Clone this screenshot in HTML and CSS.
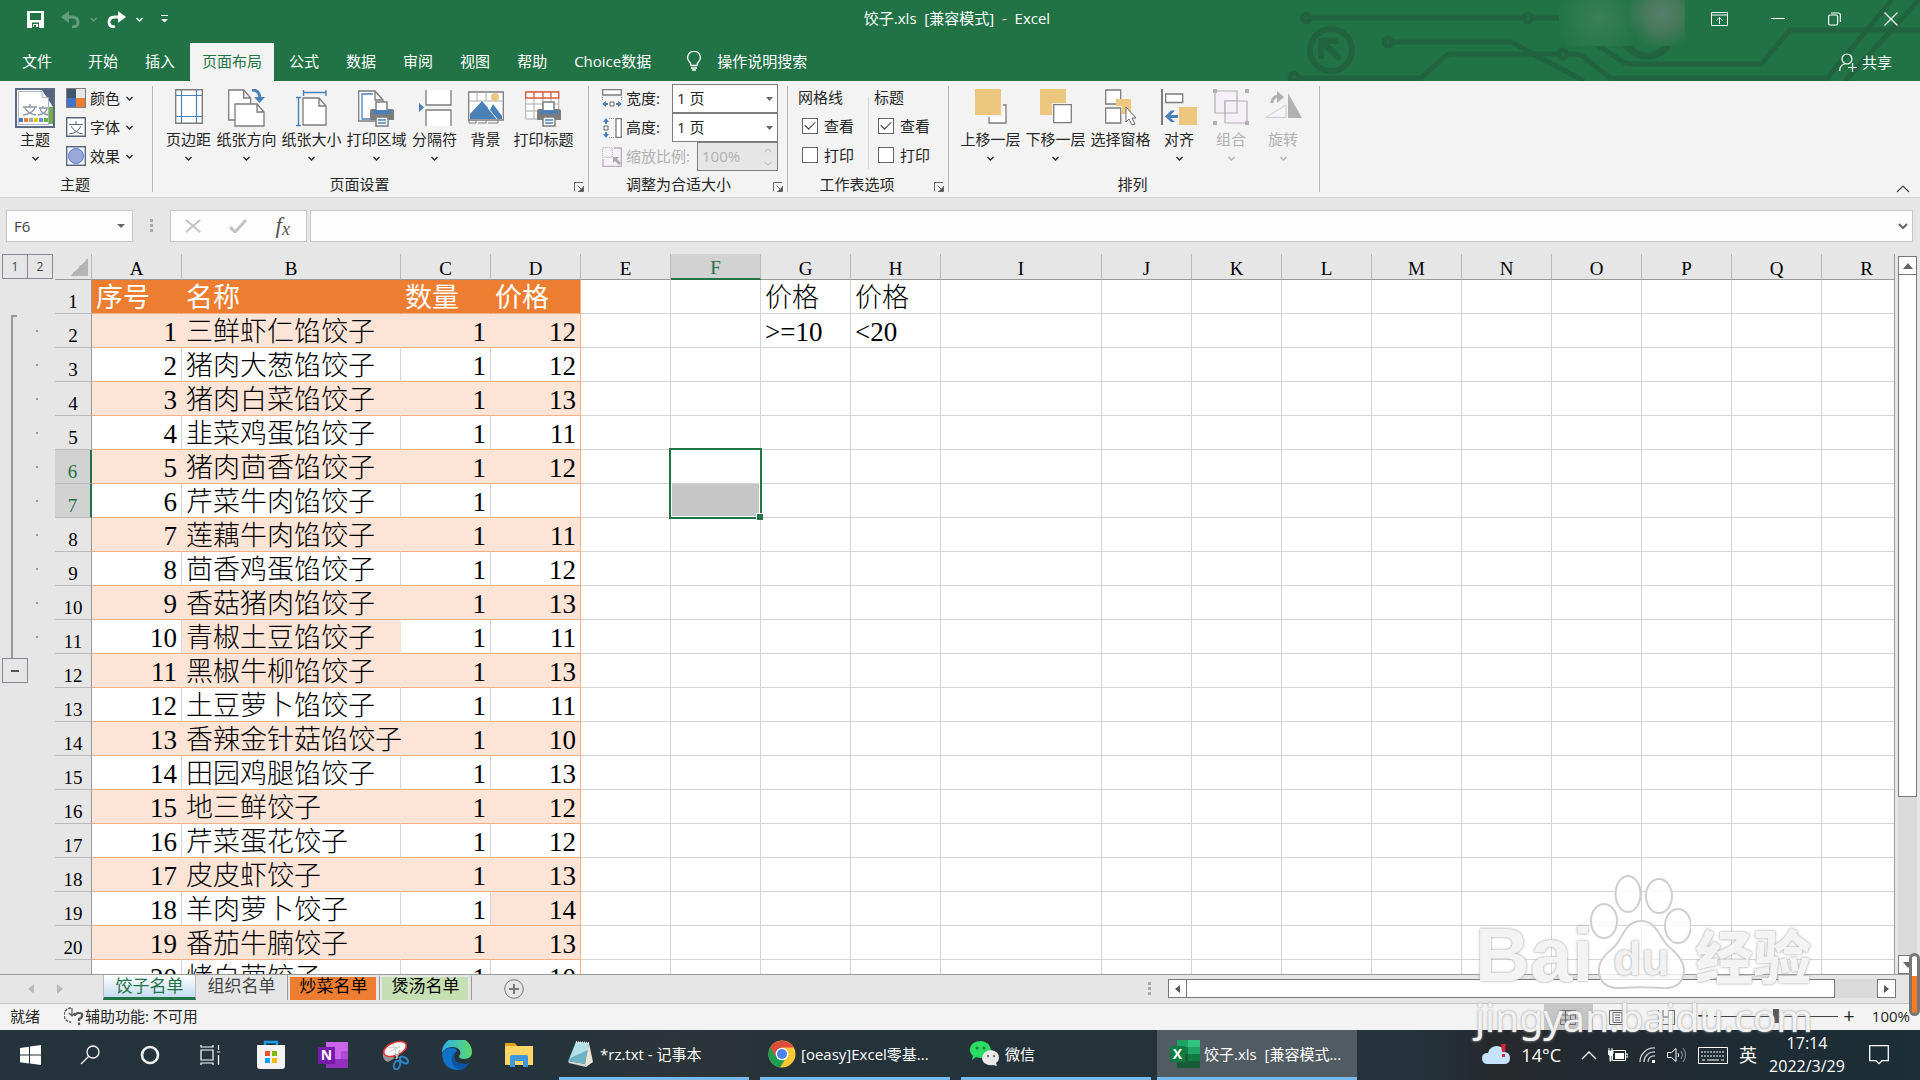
FILE: index.html
```html
<!DOCTYPE html>
<html lang="zh-CN">
<head>
<meta charset="utf-8">
<title>饺子.xls [兼容模式] - Excel</title>
<link rel="stylesheet" href="styles.css">
</head>
<body>
<svg class="defs" aria-hidden="true">
  <symbol id="chev" viewBox="0 0 7 5"><path d="M.5 1 3.5 4 6.5 1" fill="none" stroke="currentColor" stroke-width="1.3"/></symbol>
  <symbol id="launch" viewBox="0 0 10 10"><path d="M.5 9V.5H9M3.500 3.500 8 8M9.500 4V9.500H4" fill="none" stroke="#666"/><path d="M9 5v4H5z" fill="#555"/></symbol>
  <symbol id="printer" viewBox="0 0 26 26"><path d="M7 1h11v9H7z" fill="#fff" stroke="#7c7c7c" stroke-width="1.500"/><path d="M1 10q0-2 2-2h4v4h12V8h4q2 0 2 2v9H1z" fill="#7c7c7c"/><path d="M4 9h18v4H4z" fill="#4a80b8"/><path d="M7 16h12v9H7z" fill="#fff" stroke="#7c7c7c" stroke-width="1.500"/><path d="M9 19h8M9 22h8" stroke="#4a80b8" stroke-width="1.500"/></symbol>
</svg>

<header class="top">
  <svg class="circuit" viewBox="1280 0 640 81" aria-hidden="true">
    <g fill="none" stroke="#22633f" stroke-width="5">
      <circle cx="1306" cy="18" r="4"/><path d="M1310 18H1524M1532 18h27"/><circle cx="1528" cy="18" r="4"/>
      <circle cx="1331" cy="50" r="21" stroke-width="6"/><path d="M1321 59V41h18M1322 42l18 17" stroke-width="6"/>
      <circle cx="1388" cy="42" r="4"/><path d="M1392 42h116q6 0 12 5l64 34"/>
      <circle cx="1294" cy="77" r="4"/><path d="M1298 78h123l22-20q4-4 10-4h106"/><circle cx="1563" cy="54" r="4"/>
      <path d="M1567 54h8q6 0 10 4l25 20h217L1892 0M1845 81 1919 0M1596 44l24 16q5 4 12 4h129l29-34h130"/>
      <circle cx="1647" cy="31" r="25" stroke-width="7"/>
    </g>
  </svg>
  <div class="account"></div>
  <div class="titlebar">
    <div class="quick">
      <button aria-label="保存"><svg width="17" height="17" viewBox="0 0 17 17"><path fill-rule="evenodd" d="M0 0h17v17H0zM3 2v7h11V2zM5 11.500V17h7v-5.500z" fill="#fff"/><path d="M6 13h5v3H9v-2H7v2H6z" fill="#fff"/></svg></button>
      <button class="dim" aria-label="撤消"><svg width="19" height="17" viewBox="0 0 19 17"><path d="M2 6h9q6 0 6 5t-6 5" fill="none" stroke="#fff" stroke-width="2.800"/><path d="M8 0v12L0 6z" fill="#fff"/></svg></button>
      <svg class="dim" width="7" height="5"><use href="#chev"/></svg>
      <button class="redo" aria-label="恢复"><svg width="19" height="17" viewBox="0 0 19 17"><path d="M16 6H8q-6 0-6 5t6 5" fill="none" stroke="#fff" stroke-width="2.800"/><path d="M11 0v12l8-6z" fill="#fff"/></svg></button>
      <svg width="7" height="5"><use href="#chev"/></svg>
      <button class="custom" aria-label="自定义"><svg width="7" height="8" viewBox="0 0 7 8"><path d="M0 .5h7" stroke="#fff"/><path d="M0 4h7L3.500 7.500z" fill="#fff"/></svg></button>
    </div>
    <div class="title">饺子.xls&nbsp; [兼容模式]&nbsp; -&nbsp; Excel</div>
    <div class="window">
      <button aria-label="功能区显示选项"><svg width="17" height="14" viewBox="0 0 17 14" fill="none" stroke="#fff"><path d="M.5.5h16v13H.5zM0 3h17M8.500 12V5.500M5.500 8.500l3-3 3 3"/></svg></button>
      <button aria-label="最小化"><svg width="14" height="14"><path d="M0 6.500h14" stroke="#fff"/></svg></button>
      <button aria-label="还原"><svg width="13" height="14" viewBox="0 0 13 14" fill="none" stroke="#fff" stroke-width="1.200"><rect x=".6" y="3" width="9" height="10" rx="1.500"/><path d="M3 1h7q2.400 0 2.400 2v7"/></svg></button>
      <button aria-label="关闭"><svg width="14" height="14"><path d="M.5.5l13 13M13.500.5l-13 13" stroke="#fff" stroke-width="1.200"/></svg></button>
    </div>
  </div>
  <nav class="tabs">
    <button class="file">文件</button><button>开始</button><button>插入</button><button class="on">页面布局</button><button>公式</button><button>数据</button><button>审阅</button><button>视图</button><button>帮助</button><button>Choice数据</button>
    <button class="tell"><svg width="16" height="20" viewBox="0 0 16 20" fill="none" stroke="#fff" stroke-width="1.300"><path d="M5 14.500Q5 12 2.500 9.500A6.300 6.300 0 1 1 13.500 9.500Q11 12 11 14.500zM5 17h6M6 19h4"/></svg>操作说明搜索</button>
    <button class="share"><svg width="18" height="19" viewBox="0 0 18 19" fill="none" stroke="#fff" stroke-width="1.200"><circle cx="8" cy="6" r="5"/><path d="M.7 18q0-6 5-7M9 14.500h9M13.500 10v9"/></svg>共享</button>
  </nav>
</header>

<section class="ribbon">
  <div class="group themes">
    <div class="body">
      <button class="big"><svg width="40" height="40" viewBox="0 0 40 40"><path d="M1 1h38v38H1z" fill="#fff" stroke="#5c6b84" stroke-width="2"/><path d="M27 2h11v17z" fill="#56657d"/><path d="M34 19h4v17h-4z" fill="#70ad47"/><path d="M3.500 3.500H27v6h6.500v27h-30z" fill="#fff" stroke="#a9b4c6"/><path d="M8 19h14M15 16v3M10 20q3 6 11 7M20 20q-3 6-12 7M24 20h9M28 18v2M25 21q2 5 8 6M32 21q-2 5-9 6" fill="none" stroke="#8b95a6" stroke-width="1.400"/><path d="M4 30h4v4H4z" fill="#4472c4"/><path d="M9 30h4v4H9z" fill="#ed7d31"/><path d="M14 30h4v4h-4z" fill="#a5a5a5"/><path d="M19 30h4v4h-4z" fill="#ffc000"/><path d="M24 30h4v4h-4z" fill="#5b9bd5"/><path d="M29 30h4v4h-4z" fill="#70ad47"/></svg><span>主题</span><svg width="7" height="5"><use href="#chev"/></svg></button>
      <div class="stack">
        <button><svg width="20" height="20" viewBox="0 0 20 20"><path d="M0 0h20v20H0z" fill="#7c7c7c"/><path d="M1 1h9v9H1z" fill="#44546a"/><path d="M10 1h9v9h-9z" fill="#e7e6e6"/><path d="M1 10h9v9H1z" fill="#4472c4"/><path d="M10 10h9v9h-9z" fill="#ed7d31"/></svg>颜色<svg width="7" height="5"><use href="#chev"/></svg></button>
        <button><svg width="20" height="20" viewBox="0 0 20 20" fill="none" stroke="#56657d"><path d="M.7.7h18.600v18.600H.7z" fill="#fff" stroke-width="1.400"/><path d="M3 7.500h14M10 4v3M5 9q4 7 12 8M15 9q-3 7-12 8"/></svg>字体<svg width="7" height="5"><use href="#chev"/></svg></button>
        <button><svg width="20" height="20" viewBox="0 0 20 20"><path d="M.7.7h18.600v18.600H.7z" fill="#fff" stroke="#56657d" stroke-width="1.400"/><circle cx="10" cy="10" r="7.500" fill="#9aa8dc" stroke="#4f7bc6"/></svg>效果<svg width="7" height="5"><use href="#chev"/></svg></button>
      </div>
    </div>
    <h2>主题</h2>
  </div>

  <div class="group setup">
    <div class="body">
      <button class="big"><svg width="28" height="36" viewBox="0 0 28 36"><path d="M.7.700h26.600v33.600H.7z" fill="#fff" stroke="#7c7c7c" stroke-width="1.400"/><path d="M6.500 1v33M21.500 1v33M1 6.500h26M1 27.500h26" stroke="#4a80b8" stroke-width="1.200"/></svg><span>页边距</span><svg width="7" height="5"><use href="#chev"/></svg></button>
      <button class="big"><svg width="37" height="38" viewBox="0 0 37 38"><g fill="#fff" stroke="#7c7c7c" stroke-width="1.300"><path d="M.7 1h15l7 8v22H.7zM15.700 1v8h7"/><path d="M7 15h22l7 8v14H7zM29 15v8h7"/></g><path d="M24 1q8 0 8 9" fill="none" stroke="#4a80b8" stroke-width="3"/><path d="M26 8h11l-5.500 6z" fill="#4a80b8"/></svg><span>纸张方向</span><svg width="7" height="5"><use href="#chev"/></svg></button>
      <button class="big"><svg width="31" height="38" viewBox="0 0 31 38"><path d="M7 9h16l7 8v19H7zM23 9v8h7" fill="#fff" stroke="#7c7c7c" stroke-width="1.300"/><path d="M7 3.500h23M7.500 1v6M30 1v6M2.500 9v27M0 8.500h5M0 36.500h5" stroke="#4a80b8" stroke-width="1.400"/></svg><span>纸张大小</span><svg width="7" height="5"><use href="#chev"/></svg></button>
      <button class="big"><svg width="38" height="38" viewBox="0 0 38 38"><path d="M.7 2H17l8 9v21H.7zM17 2v9h8" fill="#fff" stroke="#7c7c7c" stroke-width="1.300"/><path d="M15 5H4v25h8" fill="none" stroke="#4a80b8" stroke-width="1.300"/><use href="#printer" x="11" y="12" width="26" height="26"/></svg><span>打印区域</span><svg width="7" height="5"><use href="#chev"/></svg></button>
      <button class="big"><svg width="34" height="38" viewBox="0 0 34 38"><path d="M8 1v15h25V1M8 37V21h25v16" fill="#fff" stroke="#7c7c7c" stroke-width="1.300"/><path d="M1 14l5 4.500L1 23z" fill="#4a80b8"/></svg><span>分隔符</span><svg width="7" height="5"><use href="#chev"/></svg></button>
      <button class="big wide"><svg width="36" height="36" viewBox="0 0 36 36"><path d="M.7 3h34.600v28H.7z" fill="#fff" stroke="#7c7c7c" stroke-width="1.300"/><path d="M9 3v9M18 3v9M1 12h34M27 3v9" stroke="#aaa"/><path d="M2 30v-5l12-13 8 9 3-6 9 12v3z" fill="#4a80b8"/><path d="M20 19l9 11" stroke="#fff"/><circle cx="27" cy="8" r="4" fill="#eec77f"/><path d="M1 31v3h7v-3M10 34h8v-3M20 34h10v-3" fill="none" stroke="#7c7c7c"/></svg><span>背景</span></button>
      <button class="big"><svg width="38" height="38" viewBox="0 0 38 38"><path d="M.7 3h33v27H.7z" fill="#fff" stroke="#aaa"/><path d="M1 15h32M1 22h32M9 8v22M18 8v22M26 8v22" stroke="#aaa"/><path d="M.7 3h33v6H.7zM9 3v6M18 3v6M26 3v6" fill="#fff" stroke="#d9593f" stroke-width="1.300"/><use href="#printer" x="11" y="12" width="26" height="26"/></svg><span>打印标题</span></button>
    </div>
    <h2>页面设置</h2>
    <button class="launcher" aria-label="页面设置选项"><svg width="10" height="10"><use href="#launch"/></svg></button>
  </div>

  <div class="group fit">
    <div class="rows">
      <div class="field"><svg width="20" height="20" viewBox="0 0 20 20"><path d="M.7.700h18.600V6H.7z" fill="#fff" stroke="#7c7c7c" stroke-width="1.300"/><path d="M.5 8v4M19.500 8v4" stroke="#7c7c7c" stroke-dasharray="1 1"/><path d="M8 13h4v4H8z" fill="#fff" stroke="#666"/><path d="M0 15l4-3v2h2v2H4v2zM20 15l-4-3v2h-2v2h2v2z" fill="#4a80b8"/></svg><label for="w">宽度:</label><div class="combo"><select id="w"><option>1 页</option></select><svg width="7" height="4"><path d="M0 0h7L3.500 4z" fill="#666"/></svg></div></div>
      <div class="field"><svg width="20" height="20" viewBox="0 0 20 20"><path d="M14 .7h5.300v18.600H14z" fill="#fff" stroke="#7c7c7c" stroke-width="1.300"/><path d="M7 .5h5M7 19.500h5" stroke="#7c7c7c" stroke-dasharray="1 1"/><path d="M2 8h4v4H2z" fill="#fff" stroke="#666"/><path d="M4 0l3 4H5v2H3V4H1zM4 20l3-4H5v-2H3v2H1z" fill="#4a80b8"/></svg><label for="h">高度:</label><div class="combo"><select id="h"><option>1 页</option></select><svg width="7" height="4"><path d="M0 0h7L3.500 4z" fill="#666"/></svg></div></div>
      <div class="field off"><svg width="20" height="20" viewBox="0 0 20 20"><path d="M1 12v7.300h18.300V1H12" fill="#f6f0f8" stroke="#b9aebb" stroke-width="1.300"/><path d="M.7.700h9.600v9.600H.7z" fill="none" stroke="#aaa" stroke-dasharray="1 1"/><path d="M11 10h6l-2 2 4 4-2 2-4-4-2 2z" fill="#aaa"/></svg><label for="z">缩放比例:</label><div class="combo"><input id="z" value="100%" disabled><svg width="8" height="18" fill="none" stroke="#aaa"><path d="M.5 4 4 .7 7.500 4M.5 14 4 17.300 7.500 14"/></svg></div></div>
    </div>
    <h2>调整为合适大小</h2>
    <button class="launcher" aria-label="调整选项"><svg width="10" height="10"><use href="#launch"/></svg></button>
  </div>

  <div class="group options">
    <div class="pair">
      <fieldset><legend>网格线</legend><label><input type="checkbox" checked>查看</label><label><input type="checkbox">打印</label></fieldset>
      <fieldset><legend>标题</legend><label><input type="checkbox" checked>查看</label><label><input type="checkbox">打印</label></fieldset>
    </div>
    <h2>工作表选项</h2>
    <button class="launcher" aria-label="工作表选项"><svg width="10" height="10"><use href="#launch"/></svg></button>
  </div>

  <div class="group arrange">
    <div class="body">
      <button class="big"><svg width="32" height="36" viewBox="0 0 32 36"><path d="M14 16h17v18H14z" fill="#fff" stroke="#7c7c7c" stroke-width="1.300"/><path d="M0 0h28v28H0z" fill="#f3f3f3"/><path d="M0 0h26v26H0z" fill="#eec77f"/></svg><span>上移一层</span><svg width="7" height="5"><use href="#chev"/></svg></button>
      <button class="big"><svg width="32" height="36" viewBox="0 0 32 36"><path d="M0 0h26v26H0z" fill="#eec77f"/><path d="M12 14h20v22H12z" fill="#f3f3f3"/><path d="M13.700 15.700h17.600v18H13.700z" fill="#fff" stroke="#7c7c7c" stroke-width="1.300"/></svg><span>下移一层</span><svg width="7" height="5"><use href="#chev"/></svg></button>
      <button class="big"><svg width="32" height="37" viewBox="0 0 32 37"><path d="M.7 1h15v14H.7z" fill="#fff" stroke="#7c7c7c" stroke-width="1.300"/><path d="M11 10h15v15H11z" fill="#eec77f"/><path d="M0 17h17v18H0z" fill="#f3f3f3"/><path d="M.7 19h15v15H.7z" fill="#fff" stroke="#7c7c7c" stroke-width="1.300"/><path d="M21 18v15l3-3 3 6 3-1-3-6h4z" fill="#fff" stroke="#666"/></svg><span>选择窗格</span></button>
      <button class="big narrow"><svg width="36" height="37" viewBox="0 0 36 37"><path d="M1 0v36" stroke="#7c7c7c" stroke-width="2"/><path d="M4.700 5h17v8.500h-17z" fill="#fff" stroke="#7c7c7c" stroke-width="1.300"/><path d="M18 18h18v18H18z" fill="#eec77f"/><path d="M4 27.500l6-6h4l-4.500 4.500H17v3H9.500L14 33h-4z" fill="#4a80b8"/></svg><span>对齐</span><svg width="7" height="5"><use href="#chev"/></svg></button>
      <button class="big narrow off"><svg width="36" height="37" viewBox="0 0 36 37"><g stroke="#b1b1b1" stroke-width="1.200" fill="#f5f0f7"><path d="M2 2h22v22H2z"/><path d="M12 12h22v22H12z"/><path d="M12 12h12v12H12z"/></g><path d="M0 0h4v4H0zM32 0h4v4h-4zM0 32h4v4H0zM32 32h4v4h-4z" fill="#b1b1b1"/></svg><span>组合</span><svg width="7" height="5"><use href="#chev"/></svg></button>
      <button class="big narrow off"><svg width="37" height="34" viewBox="0 0 37 34"><path d="M1 28.500 21 16v12.500z" fill="#f8f2fa" stroke="#ccc"/><path d="M23 4v25h14z" fill="#b1b1b1"/><path d="M7 14q0-7 8-7" fill="none" stroke="#b1b1b1" stroke-width="3"/><path d="M12 2l7 6-7 6z" fill="#b1b1b1"/></svg><span>旋转</span><svg width="7" height="5"><use href="#chev"/></svg></button>
    </div>
    <h2>排列</h2>
  </div>
  <button class="collapse" aria-label="折叠功能区"><svg width="14" height="8"><path d="M1 7l6-6 6 6" fill="none" stroke="#444" stroke-width="1.200"/></svg></button>
</section>

<section class="formula">
  <div class="namebox"><input aria-label="名称框" value="F6"><svg width="8" height="4"><path d="M0 0h8L4 4z" fill="#666"/></svg></div>
  <svg class="grip" width="3" height="14" fill="#a9a9a9"><path d="M0 0h3v3H0zM0 5h3v3H0zM0 10h3v3H0z"/></svg>
  <div class="fx">
    <button aria-label="取消"><svg width="16" height="14"><path d="M1 1l14 12M15 1 1 13" stroke="#c3c3c3" stroke-width="2"/></svg></button>
    <button aria-label="输入"><svg width="18" height="14"><path d="M1 8l5 5L17 1" fill="none" stroke="#c3c3c3" stroke-width="3"/></svg></button>
    <button class="fn" aria-label="插入函数"><i>f</i><i class="x">x</i></button>
  </div>
  <div class="entry"><input aria-label="编辑栏"><svg width="10" height="7"><path d="M1 1l4 4 4-4" fill="none" stroke="#666" stroke-width="2"/></svg></div>
</section>

<main class="work">
  <aside class="outline">
    <div class="levels"><button>1</button><button>2</button></div>
    <div class="bracket"></div>
    <div class="dots"><i></i><i></i><i></i><i></i><i></i><i></i><i></i><i></i><i></i><i></i></div>
    <button class="minus" aria-label="折叠"></button>
  </aside>
  <div class="view"><table class="sheet" id="sheet"></table></div>
  <div class="vbar">
    <button aria-label="向上"><svg width="10" height="6"><path d="M0 6h10L5 0z" fill="#666"/></svg></button>
    <div class="thumb"></div><div class="track"></div>
    <button aria-label="向下"><svg width="10" height="6"><path d="M0 0h10L5 6z" fill="#666"/></svg></button>
  </div>
</main>

<section class="bottom">
  <div class="nav"><svg width="6" height="10"><path d="M6 0v10L0 5z" fill="#bbb"/></svg><svg width="6" height="10"><path d="M0 0v10l6-5z" fill="#bbb"/></svg></div>
  <div class="sheets"><button class="active">饺子名单</button><button>组织名单</button><button class="orange">炒菜名单</button><button class="green">煲汤名单</button></div>
  <button class="add" aria-label="新工作表"><svg width="20" height="20" fill="none" stroke="#777"><circle cx="10" cy="10" r="9.300"/><path d="M5 10h10M10 5v10" stroke-width="2"/></svg></button>
  <svg class="grip" width="3" height="14" fill="#a9a9a9"><path d="M0 0h3v3H0zM0 5h3v3H0zM0 10h3v3H0z"/></svg>
  <div class="hbar">
    <button aria-label="向左"><svg width="5" height="8"><path d="M5 0v8L0 4z" fill="#555"/></svg></button>
    <div class="thumb"></div><div class="track"></div>
    <button aria-label="向右"><svg width="5" height="8"><path d="M0 0v8l5-4z" fill="#555"/></svg></button>
  </div>
</section>

<footer class="status">
  <span>就绪</span>
  <span class="access"><svg width="20" height="18" viewBox="0 0 20 18" fill="none" stroke="#555"><path d="M7 1A7 7 0 0 0 7 15" stroke-dasharray="3 1" stroke-width="1.500"/><path d="M8 1v7M5 6l3 3 3-3" stroke-width="1.200"/><path d="M11 9q0-3 4-3t3 3q0 2-3 3v2M15 15.500V18" stroke-width="2.200"/></svg>辅助功能: 不可用</span>
  <div class="views">
    <button class="on" aria-label="普通"><svg width="16" height="15" fill="none" stroke="#666"><path d="M.5.5h15v14H.5zM0 5h16M0 10h16M5.500 0v15M10.500 0v15"/></svg></button>
    <button aria-label="页面布局"><svg width="17" height="15" fill="none" stroke="#666"><path d="M.5.5h16v14H.5zM4 2.500h9v10H4zM6 5h5M6 7.500h5M6 10h5"/></svg></button>
    <button aria-label="分页预览"><svg width="17" height="15" fill="none" stroke="#666"><path d="M.5 0v14.500h16V.5H11M5 0v7h6V0M1 10h5"/></svg></button>
  </div>
  <div class="zoomer"><button aria-label="缩小">−</button><input type="range" aria-label="缩放"><button aria-label="放大">+</button></div>
  <span class="pct">100%</span>
</footer>

<footer class="taskbar">
  <button class="ic" aria-label="开始菜单"><svg width="21" height="20" fill="#fff"><path d="M0 3l9-1.300V9.500H0zM10 1.500 21 0v9.500H10zM0 10.500h9v8L0 17.200zM10 10.500h11V20l-11-1.500z"/></svg></button>
  <button class="ic" aria-label="搜索"><svg width="20" height="20" fill="none" stroke="#fff" stroke-width="1.300"><circle cx="13" cy="7" r="6"/><path d="M8.500 11.500 1 19"/></svg></button>
  <button class="ic" aria-label="Cortana"><svg width="20" height="20"><circle cx="10" cy="10" r="8" fill="none" stroke="#eee" stroke-width="2.600"/></svg></button>
  <button class="ic" aria-label="任务视图"><svg width="21" height="20" fill="none" stroke="#fff" stroke-width="1.200"><path d="M1 5h12v10H1zM1 0v2h12V0M1 20v-2h12v2M18.500 0v5M18.500 10v10M17 7h3"/></svg></button>
  <button class="ic" aria-label="Microsoft Store"><svg width="30" height="30"><path d="M9 7V2h12v5" fill="none" stroke="#18a0e8" stroke-width="2.400"/><path d="M1 5h28v21q0 3-3 3H4q-3 0-3-3z" fill="#f3f3f3"/><path d="M9 11h5v5H9z" fill="#f25022"/><path d="M16 11h5v5h-5z" fill="#7fba00"/><path d="M9 18h5v5H9z" fill="#00a4ef"/><path d="M16 18h5v5h-5z" fill="#ffb900"/></svg></button>
  <button class="ic" aria-label="OneNote"><svg width="30" height="30"><path d="M8 2h22v26H8z" fill="#ca64ea"/><path d="M23 11h7v8h-7z" fill="#ae4bd5"/><path d="M8 19h22v9H8z" fill="#9332bf"/><path d="M0 7h17v17H0z" fill="#7719aa"/><text x="8.500" y="20" text-anchor="middle" class="glyph">N</text></svg></button>
  <button class="ic" aria-label="截图工具"><svg width="30" height="30"><path d="M3 13Q2 20 8 22l7-4z" fill="#999"/><ellipse cx="15" cy="9" rx="12" ry="6.500" transform="rotate(-22 15 9)" fill="#fff" stroke="#d33" stroke-width="1.600"/><path d="M9 12 20 7M7 8l13-1M13 4l3 8" stroke="#ccc"/><path d="M15 13l3 5M20 10l-4 9" stroke="#bbb" stroke-width="1.500"/><g fill="none" stroke="#2f86c6" stroke-width="2"><ellipse cx="17" cy="25" rx="3" ry="4.500" transform="rotate(20 17 25)"/><ellipse cx="24" cy="20" rx="4.500" ry="2.600" transform="rotate(35 24 20)"/></g></svg></button>
  <button class="ic" aria-label="Edge"><svg width="30" height="30" viewBox="0 0 30 30"><defs><linearGradient id="eg" x1="0" x2="1"><stop offset="0" stop-color="#2cb1e8"/><stop offset="1" stop-color="#5ed86c"/></linearGradient></defs><path d="M0 13A15 15 0 0 1 30 12q0 7-8 7-5 0-5-3 2-2 1-5-2-4-8-4-7 0-10 6z" fill="url(#eg)"/><path d="M0 14Q3 7 10 8q4 0 5 3-3 2-3 6 0 7 10 7 3 0 5-1-5 7-12 7Q1 29 0 14z" fill="#1071c8"/><path d="M15 11q-7 3-5 11 2 6 8 8 6-1 9-7-2 1-5 1-10 0-10-7 0-4 3-6z" fill="#0d55a4"/></svg></button>
  <button class="ic" aria-label="文件资源管理器"><svg width="30" height="28"><path d="M1 2h10l3 4H1z" fill="#e0a018"/><path d="M1 5h28v19H1z" fill="#ffd565"/><path d="M6 26V16q0-2 2-2h14q2 0 2 2v10h-5v-6h-8v6z" fill="#3f97dc"/></svg></button>
  <div class="apps">
    <button class="app"><svg width="28" height="28"><path d="M9 2l13 1-4 21-17-3z" fill="#6fb4c6"/><path d="M9 2l13 1-1 7L3 18z" fill="#b4e0ea"/><path d="M22 3l4 19-7 5-1-3z" fill="#e8e4d6"/><path d="M1 21l17 3 1 3-17-4z" fill="#d4dadb"/><path d="M9 2l13 1" stroke="#eee" stroke-width="2" stroke-dasharray="1 1"/></svg>*rz.txt - 记事本</button>
    <button class="app"><svg width="28" height="28" viewBox="0 0 28 28"><circle cx="14" cy="14" r="13.500" fill="#fcc934"/><path d="M14 14 2.300 7.300A13.500 13.500 0 0 0 12 27.400l7-11z" fill="#1e9e53"/><path d="M2.300 7.300A13.500 13.500 0 0 1 25.700 7.500H14L8 17z" fill="#de4d3b"/><circle cx="14" cy="14" r="6.300" fill="#fff"/><circle cx="14" cy="14" r="5" fill="#4a84ea"/></svg>[oeasy]Excel零基...</button>
    <button class="app"><svg width="31" height="28"><path d="M3 20l1-4Q0 12 1 8q2-7 11-7 9 1 10 9 0 8-10 8-3 0-5-1z" fill="#2bdc62"/><circle cx="8" cy="8" r="1.500" fill="#15803d"/><circle cx="15" cy="8" r="1.500" fill="#15803d"/><path d="M28 26l-4-1q-9 1-11-6 0-8 9-9 8 1 8 8 0 3-3 5z" fill="#e9e9e9"/><circle cx="19" cy="16" r="1.200" fill="#777"/><circle cx="25" cy="16" r="1.200" fill="#777"/></svg>微信</button>
    <button class="app cur"><svg width="30" height="28"><path d="M7 0h23v28H7z" fill="#21a366"/><path d="M18 0h12v7H18z" fill="#33c481"/><path d="M7 7h11v7H7z" fill="#107c41"/><path d="M18 14h12v7H18z" fill="#107c41"/><path d="M7 14h11v14H7zM18 21h12v7H18z" fill="#185c37"/><path d="M0 6h15v16H0z" fill="#107c41"/><text x="7.500" y="19" text-anchor="middle" class="glyph">X</text></svg>饺子.xls&nbsp; [兼容模式...</button>
  </div>
  <div class="tray">
    <svg width="28" height="22"><path d="M6 20q-6 0-6-6 0-5 6-5 2-7 9-7 6 0 8 6 5 1 5 6 0 6-6 6z" fill="#c5e4fb"/><path d="M19 0h5l-1 8h-3zM20 10h3v3h-3z" fill="#d8203a"/></svg>
    <span class="temp">14°C</span>
    <svg width="16" height="10"><path d="M1 9l7-7 7 7" fill="none" stroke="#fff" stroke-width="1.400"/></svg>
    <svg class="bat" width="20" height="14"><path d="M4.500 2.500h13v10h-13zM18 6h2v3h-2" fill="none" stroke="#fff"/><path d="M7 5h9v6H7z" fill="#fff"/><path d="M0 3h5v3l-2 2v5H2V8L0 6zM1 0v3M4 0v3" fill="#fff" stroke="#fff"/></svg>
    <svg class="wifi" width="17" height="16" fill="none" stroke="#ccc" stroke-width="1.300"><path d="M1 15A14 14 0 0 1 16 1M5 15A10 10 0 0 1 16 5M9 15a6 6 0 0 1 7-6"/><path d="M13 13h3v3h-3z" fill="#fff" stroke="none"/></svg>
    <svg width="20" height="16" fill="none" stroke="#fff"><path d="M.5 5.500h4L9 1.500v13L4.500 10.500h-4z"/><path d="M11 6q1.500 2 0 4"/><path d="M14 4q3 4 0 8M16 1q5 7 0 14" stroke="#99a"/></svg>
    <svg width="30" height="17" fill="none" stroke="#fff"><path d="M.5.5h29v16H.5z"/><path d="M3 5h24M3 9h24" stroke-dasharray="2 1"/><path d="M4 13h3M9 13h12M23 13h3"/></svg>
    <span class="ime">英</span>
    <div class="clock"><span>17:14</span><span>2022/3/29</span></div>
    <svg class="note" width="20" height="20" fill="none" stroke="#fff" stroke-width="1.300"><path d="M.7.700h18.600v15H13l-3 3-3-3H.7z"/></svg>
  </div>
</footer>

<div class="pill"></div>
<div class="mark" aria-hidden="true">
  <div class="brand"><b>Bai</b><span class="paw"><svg width="102" height="116" viewBox="0 0 102 116"><g fill="rgba(255,255,255,.78)" stroke="#cfcfcf" stroke-width="2"><ellipse cx="15" cy="46" rx="13" ry="17"/><ellipse cx="39" cy="19" rx="12.500" ry="18"/><ellipse cx="70" cy="21" rx="13" ry="17"/><ellipse cx="89" cy="51" rx="13" ry="17"/><path d="M52 46c16 0 18 17 28 26 10 8 15 15 15 23 0 14-10 19-22 18-13-1-29-1-41 0C18 114 10 107 10 95c0-10 7-16 15-23 9-9 11-26 27-26z"/></g></svg><b>du</b></span><b class="han">经验</b></div>
  <div class="url">jingyan.baidu.com</div>
</div>
<script src="sheet.js"></script>
</body>
</html>
```
FILE: sheet.js
```js
const columns = 'ABCDEFGHIJKLMNOPQR'.split('');
const widths = { B: 219, I: 161 };
const names = ['三鲜虾仁馅饺子', '猪肉大葱馅饺子', '猪肉白菜馅饺子', '韭菜鸡蛋馅饺子', '猪肉茴香馅饺子', '芹菜牛肉馅饺子', '莲藕牛肉馅饺子', '茴香鸡蛋馅饺子', '香菇猪肉馅饺子', '青椒土豆馅饺子', '黑椒牛柳馅饺子', '土豆萝卜馅饺子', '香辣金针菇馅饺子', '田园鸡腿馅饺子', '地三鲜饺子', '芹菜蛋花饺子', '皮皮虾饺子', '羊肉萝卜饺子', '番茄牛腩饺子', '烤白萝饺子'];
const prices = [12, 12, 13, 11, 12, '', 11, 12, 13, 11, 13, 11, 10, 13, 12, 12, 13, 14, 13, 10];
const cells = { A1: '序号', B1: '名称', C1: '数量', D1: '价格', G1: '价格', H1: '价格', G2: '>=10', H2: '<20' };
names.forEach((name, i) => {
  const r = i + 2;
  cells['A' + r] = i + 1;
  cells['B' + r] = name;
  cells['C' + r] = 1;
  cells['D' + r] = prices[i];
});
const tinted = (c, r) => (c < 4 && r % 2 === 0) || (c === 1 && r === 11) || (c === 3 && r === 19);

const table = document.getElementById('sheet');
const add = (parent, tag, cls) => {
  const el = document.createElement(tag);
  if (cls) el.className = cls;
  parent.append(el);
  return el;
};
const group = add(table, 'colgroup');
add(group, 'col').style.width = '37px';
columns.forEach(c => { add(group, 'col').style.width = (widths[c] || 90) + 'px'; });
const head = add(add(table, 'thead'), 'tr');
add(head, 'th', 'corner');
columns.forEach(c => { add(head, 'th', c === 'F' ? 'sel' : '').textContent = c; });
const body = add(table, 'tbody');
for (let r = 1; r <= 21; r++) {
  const row = add(body, 'tr');
  add(row, 'th', r === 6 || r === 7 ? 'sel' : '').textContent = r;
  columns.forEach((c, i) => {
    const value = cells[c + r] ?? '';
    const cls = [];
    if (i < 4) cls.push(r === 1 ? 'head' : 'data');
    if (r > 1 && tinted(i, r)) cls.push('tint');
    if (i === 3) cls.push('last');
    if (typeof value === 'number') cls.push('num');
    if (c === 'F' && r === 7) cls.push('filled');
    const td = add(row, 'td', cls.join(' '));
    td.textContent = value;
    if (c === 'F' && r === 6) {
      td.classList.add('anchor');
      add(td, 'div', 'selection');
    }
  });
}
```
FILE: styles.css
```css
* { box-sizing: border-box; }
body {
  margin: 0; height: 100vh; display: flex; flex-direction: column; overflow: hidden;
  position: relative; background: #e6e6e6; color: #262626;
  font: 15px/20px "Open Sans", "Noto Sans CJK SC", sans-serif;
}
button, input, select { font: inherit; color: inherit; margin: 0; padding: 0; border: 0; background: none; border-radius: 0; }
button { display: flex; align-items: center; justify-content: center; white-space: nowrap; }
svg { display: block; flex: none; }
h2 { margin: 0; font: inherit; }
.defs { position: absolute; width: 0; height: 0; }

.top { position: relative; background: #217346; color: #fff; height: 81px; flex: none; }
.circuit { position: absolute; right: 0; top: 0; width: 640px; height: 81px; }
.account {
  position: absolute; right: 235px; top: 0; width: 126px; height: 46px;
  background: radial-gradient(circle at 103px 14px, #557d6b 0, #4a7a5c 16px, transparent 36px), radial-gradient(circle at 40px 18px, #3a8058 0, transparent 42px), #217346;
}
.titlebar { position: relative; display: grid; grid-template-columns: 1fr auto 1fr; align-items: center; height: 38px; }
.title { padding: 0 6px 2px 0; }
.quick { display: flex; align-items: center; padding-left: 27px; gap: 12px; }
.quick button:first-child { margin-right: 5px; }
.quick .redo { margin-left: -2px; }
.quick > svg { margin-left: -2px; }
.quick .custom { margin-left: 6px; }
.dim { opacity: .3; }
.window { display: flex; justify-content: flex-end; gap: 43px; padding-right: 22px; }
.tabs { position: relative; display: flex; gap: 3px; height: 43px; padding: 5px 28px 0 10px; }
.tabs button { padding: 0 12px 2px; height: 38px; }
.tabs .file { margin-right: 9px; }
.tabs .on { background: #f3f3f3; color: #217346; }
.tabs .tell { gap: 15px; margin-left: 8px; }
.tabs .share { margin-left: auto; gap: 5px; padding: 0; }

.ribbon { position: relative; display: flex; flex: none; background: #f3f3f3; border-bottom: 1px solid #d2d2d2; padding: 5px 0; height: 117px; }
.group { position: relative; display: flex; flex-direction: column; justify-content: space-between; border-right: 1px solid #b5b5b5; }
.group h2 { text-align: center; line-height: 16px; }
.group .body { display: flex; }
.themes { width: 153px; padding-left: 8px; }
.themes h2 { margin-right: 10px; }
.setup { width: 436px; padding-left: 10px; }
.fit { width: 199px; padding-left: 13px; }
.options { width: 161px; padding-left: 10px; }
.arrange { width: 371px; padding-left: 9px; }
.setup h2, .fit h2, .options h2 { padding-right: 32px; }
.arrange h2 { padding-right: 12px; }
.big { flex-direction: column; justify-content: flex-start; padding: 3px 3px 0; height: 80px; color: #262626; }
.big > svg:first-child { margin-bottom: auto; }
.big > svg:last-child { margin: 7px 0 5px; }
.big > span:last-child { margin-bottom: 17px; }
.big.wide { width: 50px; }
.big.narrow { width: 52px; }
.themes .big { width: 54px; margin-right: 4px; padding-top: 2px; }
.setup .big { width: 65px; }
.setup .big:nth-child(1), .setup .big:nth-child(5), .setup .big.wide { width: 51px; }
.arrange .big { width: 65px; }
.arrange .big.narrow { width: 52px; }
.big.off, .off { color: #b1b1b1; }
.stack button { height: 29px; gap: 4px; padding-bottom: 5px; }
.stack button svg:last-child { margin-left: 2px; }
.launcher { position: absolute; right: 4px; bottom: 0; }
.field { display: flex; align-items: center; height: 29px; gap: 4px; }
.rows { margin-top: -2px; }
.combo { position: relative; margin-left: auto; margin-right: 9px; }
.combo select, .combo input { appearance: none; display: block; width: 106px; height: 29px; padding: 0 0 2px 4px; border: 1px solid #7c7c7c; background: #fff; opacity: 1; }
.combo svg { position: absolute; right: 5px; top: 13px; }
.off .combo input { width: 81px; background: #e6e6e6; color: #b1b1b1; }
.off .combo svg { top: 6px; right: 6px; }
.field label { padding-bottom: 2px; }
.pair { display: flex; }
.pair fieldset { border: 0; margin: 1px 0 0; padding: 0 4px; width: 70px; display: flex; flex-direction: column; }
.pair fieldset + fieldset { border-left: 1px solid #d5d5d5; width: 78px; padding-left: 9px; }
.pair legend { padding: 0; margin: 0 0 4px -4px; }
.pair label { display: flex; align-items: center; gap: 6px; height: 29px; white-space: nowrap; }
.pair input { appearance: none; display: grid; place-items: center; flex: none; width: 16px; height: 16px; background: #fff; border: 1px solid #666; }
.pair input:checked::after { content: ""; width: 9px; height: 5px; border: solid #333; border-width: 0 0 1px 1px; transform: rotate(-45deg); margin-bottom: 3px; }
.collapse { position: absolute; right: 10px; bottom: 4px; }

.formula { display: flex; align-items: center; flex: none; height: 56px; padding: 0 7px 0 6px; }
.namebox, .fx, .entry { display: flex; align-items: center; height: 32px; border: 1px solid #c6c6c6; background: #fdfdfd; }
.namebox { width: 127px; padding: 0 7px; }
.namebox input, .entry input { flex: 1; min-width: 0; color: #444; }
.formula .grip { margin: 0 17px; }
.fx { width: 137px; justify-content: space-between; padding: 0 16px 0 14px; margin-right: 3px; }
.fn { font: 23px/26px "Liberation Serif", serif; color: #555; }
.fn .x { font-size: 18px; padding-top: 6px; }
.entry { flex: 1; padding: 0 4px; }

.work { display: flex; flex: 1; min-height: 0; border-bottom: 1px solid #999; }
.outline { position: relative; width: 55px; flex: none; }
.levels { display: flex; padding-left: 2px; }
.levels button, .minus { width: 26px; height: 25px; border: 1px solid #858a91; font-size: 12px; color: #444; }
.levels button + button { margin-left: -1px; }
.bracket { width: 6px; height: 343px; margin: 36px 0 0 11px; border: solid #999; border-width: 2px 0 0 2px; }
.minus { margin-left: 2px; }
.minus::after { content: ""; width: 8px; height: 2px; background: #555; }
.dots { position: absolute; left: 36px; top: 60px; display: grid; grid-auto-rows: 34px; align-items: center; }
.dots i { width: 2px; height: 2px; background: #999; }
.view { flex: 1; min-width: 0; overflow: hidden; border-right: 1px solid #999; }
.sheet { table-layout: fixed; width: 1729px; border-collapse: separate; border-spacing: 0; font: 27px/30px "Liberation Serif", "Noto Sans CJK SC", serif; font-weight: 300; color: #000; }
.sheet th { font-weight: 400; font-size: 19px; line-height: 20px; padding: 0; background: #e6e6e6; }
.sheet thead th { height: 26px; padding-top: 4px; border-bottom: 1px solid #999; border-right: 1px solid #bbb; }
.sheet thead .corner { background: linear-gradient(135deg, #e6e6e6 50%, #b5b5b5 50%) 15px 4px / 18px 18px no-repeat #e6e6e6; }
.sheet tbody th { height: 34px; padding-top: 11px; border-right: 1px solid #999; border-bottom: 1px solid #bbb; }
.sheet .sel { background: #d2d2d2; color: #217346; }
.sheet thead .sel { border-bottom: 2px solid #217346; }
.sheet tbody .sel { border-right: 2px solid #217346; }
.sheet td { height: 34px; padding: 2px 4px 0; background: #fff; border: solid #d4d4d4; border-width: 0 1px 1px 0; white-space: nowrap; }
.sheet .num { text-align: right; }
.sheet .data { border-bottom-color: #f4b084; }
.sheet .head { background: #ed7d31; color: #fff; border-color: #ed7d31; font-weight: 400; border-bottom-color: #f4b084; }
.sheet .tint { background: #fce4d6; border-right-color: #fce4d6; }
.sheet .last { border-right-color: #f4b084; }
.sheet .filled { background: #c6c6c6; }
.sheet .anchor { position: relative; }
.selection { position: absolute; z-index: 1; left: -2px; top: -2px; width: 93px; height: 71px; border: 2px solid #217346; box-shadow: inset 0 0 0 1px #fff; }
.selection::after { content: ""; position: absolute; right: -3px; bottom: -3px; width: 6px; height: 6px; background: #217346; border: solid #fff; border-width: 1px 0 0 1px; }
.vbar { display: flex; flex-direction: column; width: 25px; flex: none; padding: 2px 3px 0; }
.vbar button, .hbar button, .vbar .thumb, .hbar .thumb { border: 1px solid #777; background: #fff; }
.vbar button { height: 19px; }
.vbar .thumb { flex: 523; margin-top: -1px; }
.vbar .track { flex: 159; background: #dadada; }

.bottom { display: flex; flex: none; height: 29px; border-bottom: 1px solid #c6c6c6; }
.nav { display: flex; align-items: center; gap: 23px; width: 103px; padding-left: 28px; }
.sheets { display: flex; font-size: 17px; }
.sheets button { height: 25px; width: 92px; border-right: 1px solid #999; color: #444; padding-bottom: 4px; }
.sheets .active { width: 93px; border: 1px solid #bbb; border-top: 0; border-bottom: 3px solid #217346; background: linear-gradient(#fff, #c4dcf2); color: #217346; padding-bottom: 0; }
.sheets .orange, .sheets .green { color: #000; border-top: 2px solid #e6e6e6; background: linear-gradient(#ed7d31, #ed7d31) 2px 0 / 86px 100% no-repeat; padding-bottom: 6px; }
.sheets .green { background-image: linear-gradient(#c6e0b4, #c6e0b4); }
.add { margin-left: 32px; }
.bottom .grip { margin: 7px 17px 0 auto; }
.hbar { display: flex; width: 728px; height: 19px; margin: 4px 24px 0 0; }
.hbar button { width: 19px; }
.hbar .thumb { flex: 649; margin-left: -1px; }
.hbar .track { flex: 42; background: #dadada; }

.status { display: flex; align-items: center; flex: none; height: 26px; padding: 0 10px 2px; background: #f3f3f3; }
.access { display: flex; align-items: center; gap: 1px; margin-left: 24px; }
.views { display: flex; margin: 0 0 -2px auto; height: 26px; }
.views button { width: 49px; }
.views .on { background: #c6c6c6; }
.zoomer { display: flex; align-items: center; gap: 6px; margin-left: 7px; }
.zoomer button { font-size: 20px; width: 10px; }
.zoomer input { appearance: none; width: 124px; height: 20px; background: linear-gradient(#444, #444) center / 100% 1px no-repeat; }
.zoomer input::-webkit-slider-thumb { appearance: none; width: 6px; height: 14px; background: #555; }
.pct { margin-left: 18px; }

.taskbar { display: flex; align-items: stretch; flex: none; height: 50px; background: linear-gradient(90deg, #24333c, #25333c 28%, #2c3538 35%, #24323a 45%, #24323b 74%, #26292c 78%, #1f2c34 90%, #1c2e37); color: #fff; padding-right: 31px; }
.ic { width: 60px; }
.ic:nth-child(n+5) { width: 62px; }
.ic:nth-child(9) { margin-right: 9px; }
.glyph { font: bold 14px "Open Sans", sans-serif; fill: #fff; }
.apps { display: flex; gap: 11px; }
.app { width: 190px; border-bottom: 3px solid #76b9ed; justify-content: flex-start; padding-left: 8px; gap: 5px; }
.app.cur { width: 200px; background: #515b62; padding-left: 13px; gap: 4px; margin-left: -5px; }
.tray { display: flex; align-items: center; margin-left: auto; gap: 11px; }
.temp { font-size: 18px; margin-right: 9px; }
.ime { font-size: 18px; }
.clock { display: flex; flex-direction: column; align-items: center; font-size: 16px; line-height: 23px; width: 78px; margin-right: 12px; }

.pill { position: absolute; right: 0; bottom: 64px; width: 11px; height: 63px; border: 3px solid #777; border-radius: 6px; background: linear-gradient(#fff 35%, #ff7a22 35%); }
.mark { position: absolute; right: 103px; bottom: 39px; width: 342px; color: rgba(255, 255, 255, .86); text-shadow: 0 0 3px #aaa, 0 0 1px #aaa; }
.brand { display: flex; align-items: flex-end; height: 116px; }
.brand b { font: bold 76px/72px "Liberation Sans", sans-serif; }
.paw { position: relative; margin-left: -4px; }
.paw b { position: absolute; left: 24px; bottom: 3px; font-size: 46px; line-height: 58px; }
.brand .han { font: 900 58px/66px "Noto Sans CJK SC", sans-serif; margin-left: 4px; padding-bottom: 4px; }
.url { font: 39px/48px "Noto Sans", sans-serif; margin-top: 2px; white-space: nowrap; }
```
